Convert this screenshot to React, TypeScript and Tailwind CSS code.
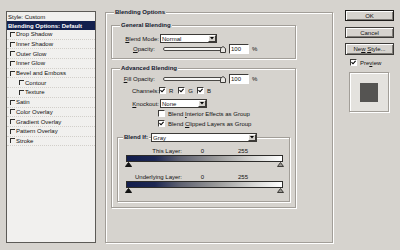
import type { ReactNode } from "react";

const listItems = [
  { label: "Drop Shadow", indent: false },
  { label: "Inner Shadow", indent: false },
  { label: "Outer Glow", indent: false },
  { label: "Inner Glow", indent: false },
  { label: "Bevel and Emboss", indent: false },
  { label: "Contour", indent: true },
  { label: "Texture", indent: true },
  { label: "Satin", indent: false },
  { label: "Color Overlay", indent: false },
  { label: "Gradient Overlay", indent: false },
  { label: "Pattern Overlay", indent: false },
  { label: "Stroke", indent: false },
];

function CheckBox({ checked = false }: { checked?: boolean }) {
  return (
    <span className="flex h-[7px] w-[7px] shrink-0 items-center justify-center border border-t-[#3c3a37] border-l-[#3c3a37] border-b-white border-r-white bg-white">
      {checked ? (
        <svg width="5" height="5" viewBox="0 0 5 5">
          <path d="M0.5 2.2 L2 3.8 L4.6 0.8" fill="none" stroke="#000" strokeWidth="1.1" />
        </svg>
      ) : null}
    </span>
  );
}

function Select({ value, width }: { value: string; width: string }) {
  return (
    <div className={`flex h-[9px] items-center justify-between border border-[#3c3a37] bg-white pl-[1px] ${width}`}>
      <span>{value}</span>
      <span className="flex h-[7px] w-[8px] items-center justify-center border border-t-white border-l-white border-b-[#3c3a37] border-r-[#3c3a37] bg-[#d6d3ce]">
        <svg width="4" height="3" viewBox="0 0 4 3">
          <path d="M0 0 H4 L2 2.5 Z" fill="#000" />
        </svg>
      </span>
    </div>
  );
}

function Slider() {
  return (
    <div className="ml-[8px] flex w-[63px] items-center">
      <div className="h-[4px] w-[60px] rounded-l-full border border-[#4a4845] bg-[#f6f6f4]" />
      <svg className="-ml-[3px]" width="6" height="7" viewBox="0 0 6 7">
        <path d="M0.5 6.5 V2.5 L3 0.5 L5.5 2.5 V6.5 Z" fill="#e8e6e2" stroke="#3c3a37" strokeWidth="1" />
      </svg>
    </div>
  );
}

function PercentInput() {
  return (
    <>
      <div className="ml-[3px] flex h-[10px] w-[20px] items-center border border-t-[#3c3a37] border-l-[#3c3a37] border-b-white border-r-white bg-white pl-[1px]">
        100
      </div>
      <span className="ml-[3px]">%</span>
    </>
  );
}

function GroupLabel({ children, ml }: { children: ReactNode; ml: string }) {
  return (
    <div className={`-mt-[4px] w-fit bg-[#d6d3ce] px-[1px] font-bold leading-[7px] text-[#14182e] ${ml}`}>
      {children}
    </div>
  );
}

function Triangle({ dark }: { dark: boolean }) {
  return (
    <svg width="7" height="5" viewBox="0 0 7 5">
      <path
        d="M3.5 0.5 L6.5 4.5 H0.5 Z"
        fill={dark ? "#111" : "#9a9893"}
        stroke={dark ? "#111" : "#3c3a37"}
        strokeWidth="1"
      />
    </svg>
  );
}

function RangeBlock({ label, first }: { label: string; first: boolean }) {
  return (
    <>
      <div className={`flex h-[7px] items-center ${first ? "mt-[5px]" : "mt-[6px]"}`}>
        <span className="w-[64px] text-right">{label}</span>
        <span className="w-[22px] text-right">0</span>
        <span className="w-[44px] text-right">255</span>
      </div>
      <div className="ml-[8px] mt-[1px] h-[7px] w-[157px] border border-[#2c2b29] bg-[linear-gradient(90deg,#121d4d_0%,#1d2752_18%,#5d6070_34%,#9a9a9a_58%,#d8d8d6_82%,#ffffff_100%)]" />
      <div className="ml-[7px] flex w-[159px] justify-between">
        <Triangle dark />
        <Triangle dark={false} />
      </div>
    </>
  );
}

const etched =
  "border border-[#a29e98] shadow-[inset_1px_1px_0_#ffffff,1px_1px_0_#ffffff]";

export default function App() {
  return (
    <div className="flex h-[250px] w-[400px] items-start overflow-hidden bg-[#d6d3ce] font-['Liberation_Sans',Arial,sans-serif] text-[6px] leading-none text-[#111]">
      {/* style list */}
      <div className="ml-[6px] mt-[11px] flex h-[232px] w-[90px] shrink-0 flex-col border border-[#5c5a56] bg-[#f1f0ee]">
        <div className="flex h-[9px] items-center pl-[1px]">Style: Custom</div>
        <div className="flex h-[9px] items-center bg-[#13204e] pl-[1px] font-bold text-white">
          Blending Options: Default
        </div>
        {listItems.map((item) => (
          <div
            className={`flex h-[9.7px] items-center border-b border-dotted border-[#d2cfca] ${
              item.indent ? "pl-[12px]" : "pl-[3px]"
            }`}
            key={item.label}
          >
            <span className="h-[5px] w-[5px] border-l border-t border-[#2e2d2b]" />
            <span className="ml-[1px]">{item.label}</span>
          </div>
        ))}
      </div>

      {/* blending options */}
      <div className={`ml-[9px] mt-[12px] h-[231px] w-[228px] shrink-0 ${etched}`}>
        <GroupLabel ml="ml-[8px]">Blending Options</GroupLabel>

        <div className={`ml-[5px] mt-[9px] h-[34px] w-[185px] ${etched}`}>
          <GroupLabel ml="ml-[8px]">General Blending</GroupLabel>
          <div className="mt-[5px] flex h-[9px] items-center">
            <span className="w-[47px] text-right">
              <u>B</u>lend Mode:
            </span>
            <div className="ml-[1px]">
              <Select value="Normal" width="w-[57px]" />
            </div>
          </div>
          <div className="mt-[1px] flex h-[10px] items-center">
            <span className="w-[43px] text-right">
              <u>O</u>pacity:
            </span>
            <Slider />
            <PercentInput />
          </div>
        </div>

        <div className={`ml-[5px] mt-[9px] h-[140px] w-[185px] ${etched}`}>
          <GroupLabel ml="ml-[8px]">Advanced Blending</GroupLabel>
          <div className="mt-[2px] flex h-[10px] items-center">
            <span className="w-[43px] text-right">
              <u>F</u>ill Opacity:
            </span>
            <Slider />
            <PercentInput />
          </div>
          <div className="mt-[2px] flex h-[9px] items-center">
            <span className="w-[47px] text-right">Channels:</span>
            <CheckBox checked />
            <span className="ml-[3px]">R</span>
            <span className="ml-[5px]">
              <CheckBox checked />
            </span>
            <span className="ml-[3px]">G</span>
            <span className="ml-[4px]">
              <CheckBox checked />
            </span>
            <span className="ml-[3px]">B</span>
          </div>
          <div className="mt-[4px] flex h-[9px] items-center">
            <span className="w-[47px] text-right">
              <u>K</u>nockout:
            </span>
            <div className="ml-[1px]">
              <Select value="None" width="w-[47px]" />
            </div>
          </div>
          <div className="mt-[1px] flex h-[9px] items-center pl-[46px]">
            <CheckBox />
            <span className="ml-[3px]">
              Blend <u>I</u>nterior Effects as Group
            </span>
          </div>
          <div className="mt-[1px] flex h-[9px] items-center pl-[46px]">
            <CheckBox checked />
            <span className="ml-[3px]">
              Blend <u>C</u>lipped Layers as Group
            </span>
          </div>

          <div className={`ml-[5px] mt-[9px] h-[65px] w-[173px] ${etched}`}>
            <div className="-mt-[5px] flex h-[9px] items-center">
              <span className="ml-[5px] bg-[#d6d3ce] px-[1px] font-bold leading-[7px] text-[#14182e]">
                Blend If:
              </span>
              <div className="ml-[2px]">
                <Select value="Gray" width="w-[106px]" />
              </div>
            </div>
            <RangeBlock label="This Layer:" first />
            <RangeBlock label="Underlying Layer:" first={false} />
          </div>
        </div>
      </div>

      {/* buttons */}
      <div className="ml-[12px] mt-[10px] flex w-[49px] shrink-0 flex-col">
        <button className="flex h-[11px] items-center justify-center border border-[#1e1d1b] bg-[#d6d3ce] shadow-[inset_1px_1px_0_#ffffff,inset_-1px_-1px_0_#807d78]">
          OK
        </button>
        <button className="mt-[6px] flex h-[11px] items-center justify-center border border-[#3c3a37] bg-[#d6d3ce] shadow-[inset_1px_1px_0_#ffffff,inset_-1px_-1px_0_#807d78]">
          Cancel
        </button>
        <button className="mt-[5px] flex h-[12px] items-center justify-center border border-[#3c3a37] bg-[#d6d3ce] shadow-[inset_1px_1px_0_#ffffff,inset_-1px_-1px_0_#807d78]">
          Ne<u>w</u>&nbsp;<u>S</u>tyle...
        </button>
        <div className="ml-[5px] mt-[4px] flex h-[7px] items-center">
          <CheckBox checked />
          <span className="ml-[3px]">
            Pre<u>v</u>iew
          </span>
        </div>
        <div className={`ml-[4px] mt-[6px] flex h-[40px] w-[40px] items-center justify-center bg-[#e4e2de] ${etched}`}>
          <div className="h-[19px] w-[18px] bg-[#555452]" />
        </div>
      </div>
    </div>
  );
}
